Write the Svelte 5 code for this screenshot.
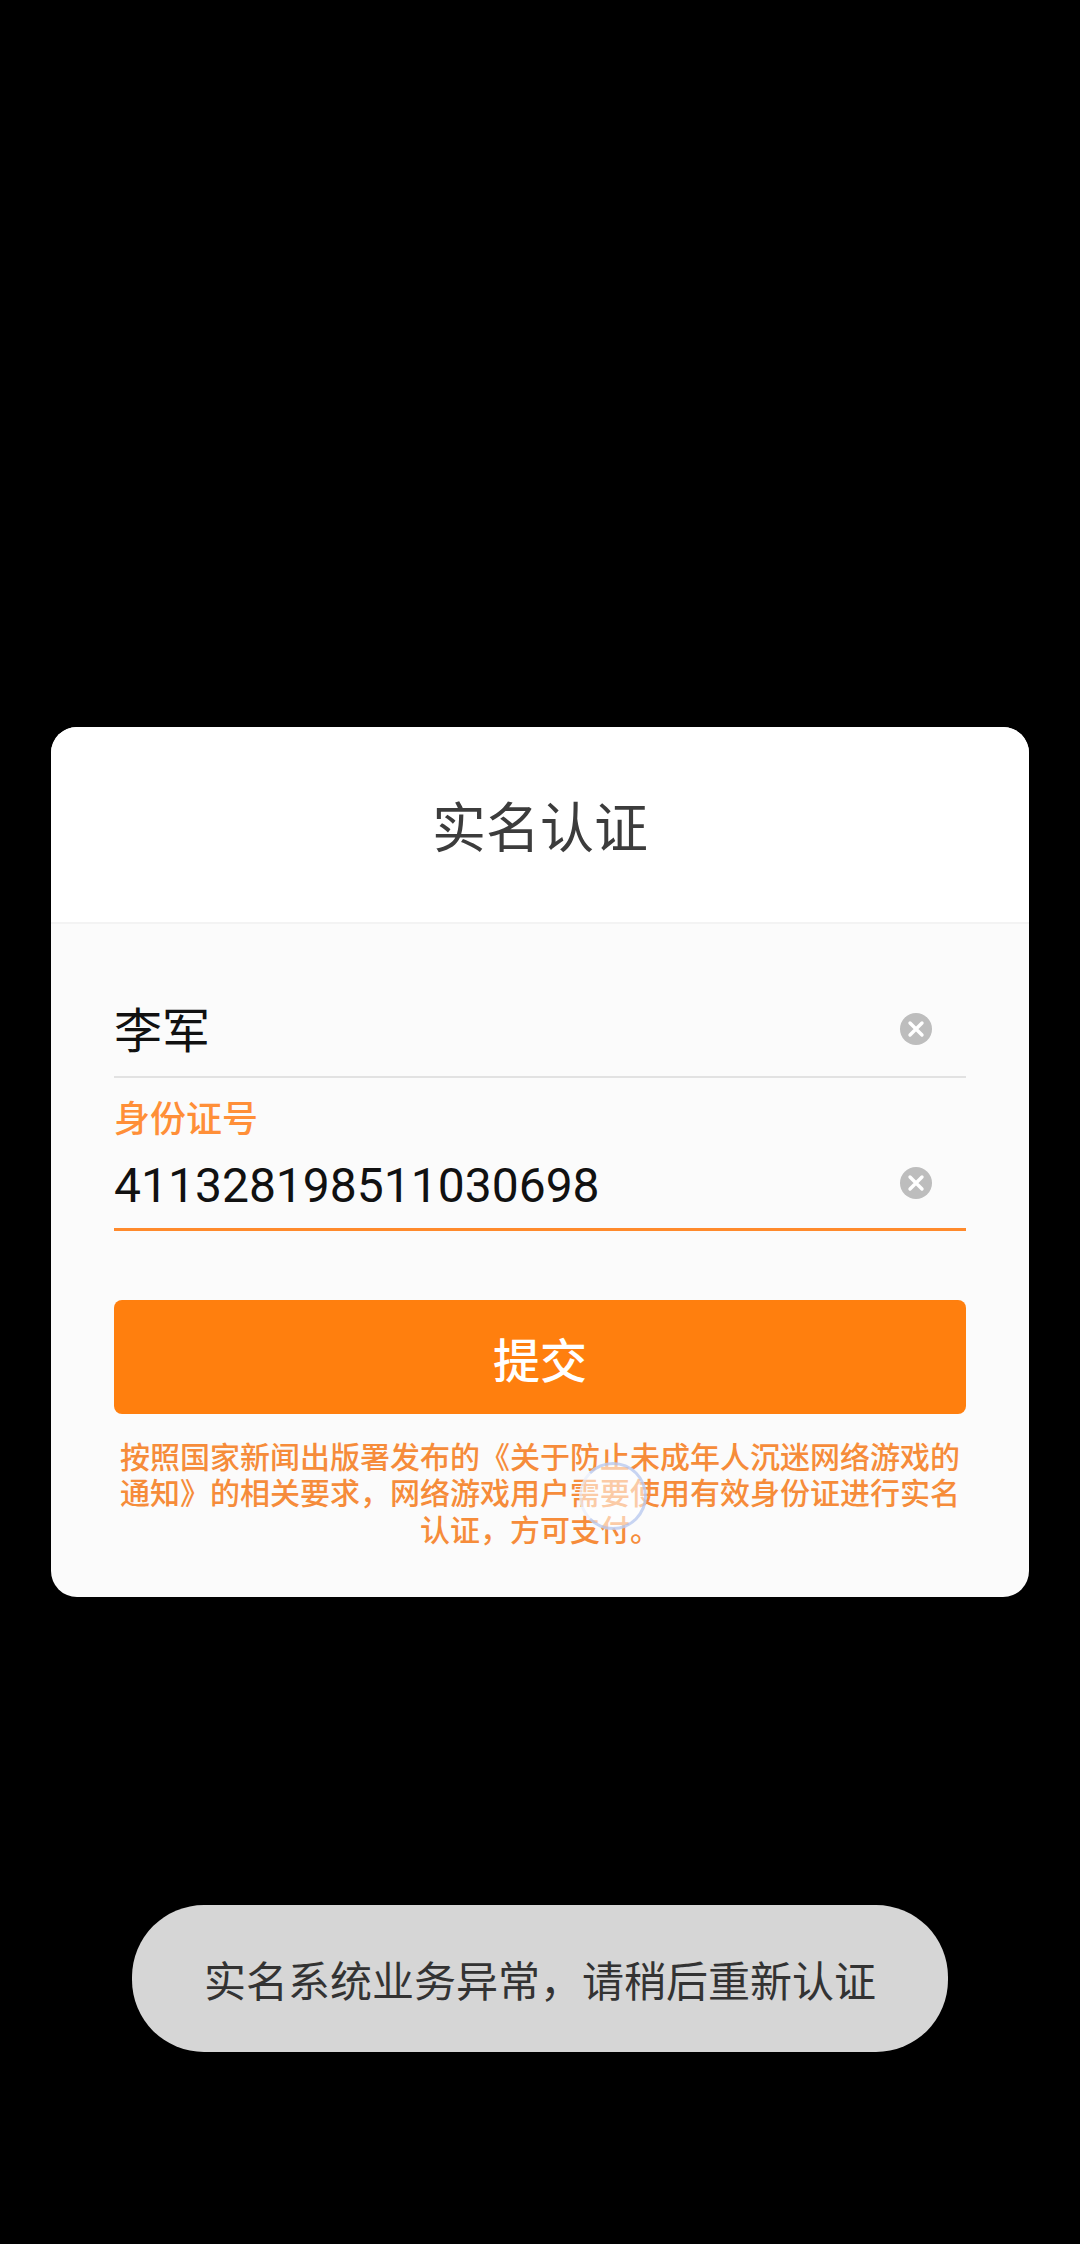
<script>
  const fields = [
    { label: '', value: '李军', focus: false },
    { label: '身份证号', value: '411328198511030698', focus: true }
  ];
</script>

<main class="screen">
  <section class="card">
    <header class="head">实名认证</header>
    <div class="body">
      {#each fields as f}
        <div class="field" class:focus={f.focus}>
          {#if f.label}<div class="label">{f.label}</div>{/if}
          <div class="row">
            <span class="value">{f.value}</span>
            <svg class="clear" viewBox="0 0 32 32" aria-hidden="true">
              <circle cx="16" cy="16" r="16" fill="#bdbdbd" />
              <path d="M10 10 L22 22 M22 10 L10 22" stroke="#fff" stroke-width="3.4" stroke-linecap="round" />
            </svg>
          </div>
        </div>
      {/each}
      <button class="submit">提交</button>
      <p class="note">按照国家新闻出版署发布的《关于防止未成年人沉迷网络游戏的通知》的相关要求，网络游戏用户需要使用有效身份证进行实名认证，方可支付。</p>
      <div class="touch"></div>
    </div>
  </section>
  <div class="toast">实名系统业务异常，请稍后重新认证</div>
</main>

<style>
  :global(body) {
    margin: 0;
    background: #000;
  }
  .screen {
    box-sizing: border-box;
    height: 2244px;
    padding: 727px 51px 0;
    background: #000;
    font-family: "Noto Sans CJK SC", Roboto, sans-serif;
    text-spacing-trim: space-all;
    display: flex;
    flex-direction: column;
    overflow: hidden;
  }
  .card {
    height: 870px;
    border-radius: 26px;
    overflow: hidden;
    background: #fbfbfb;
    display: flex;
    flex-direction: column;
  }
  .head {
    height: 197px;
    flex: none;
    box-sizing: border-box;
    background: #fff;
    border-bottom: 2px solid #f3f3f3;
    display: flex;
    align-items: center;
    justify-content: center;
    font-size: 54px;
    color: #3c3c3c;
  }
  .body {
    position: relative;
    flex: 1;
    padding: 54px 63px 0;
  }
  .field {
    border-bottom: 2px solid #e2e2e2;
  }
  .field.focus {
    border-bottom: 3px solid #ff8a2c;
  }
  .label {
    height: 50px;
    margin-top: 13px;
    font-size: 36px;
    font-weight: 500;
    line-height: 50px;
    color: #ff8f38;
  }
  .row {
    height: 98px;
    padding-top: 3px;
    box-sizing: border-box;
    display: flex;
    align-items: center;
    justify-content: space-between;
    padding-right: 34px;
  }
  .focus .row {
    height: 87px;
    padding-top: 0;
  }
  .value {
    margin-top: 6px;
    font-family: Roboto, "Noto Sans CJK SC", sans-serif;
    font-size: 48px;
    line-height: 60px;
    color: #111;
  }
  .focus .value {
    margin-top: 3px;
  }
  .clear {
    width: 32px;
    height: 32px;
  }
  .focus .clear {
    margin-top: -3px;
  }
  .submit {
    display: block;
    width: 100%;
    height: 114px;
    margin: 69px 0 0;
    border: 0;
    border-radius: 8px;
    background: #ff7f0e;
    color: #fff;
    font-family: inherit;
    font-size: 47px;
    font-weight: 500;
  }
  .note {
    margin: 23px 0 0;
    font-size: 30px;
    font-weight: 500;
    line-height: 36.4px;
    text-align: center;
    color: #f68c3a;
  }
  .touch {
    position: absolute;
    left: 528px;
    top: 538px;
    width: 68px;
    height: 68px;
    box-sizing: border-box;
    border-radius: 50%;
    background: rgba(255, 255, 255, 0.55);
    border: 3px solid rgba(170, 190, 235, 0.65);
    border-left-color: rgba(225, 232, 248, 0.5);
  }
  .toast {
    box-sizing: border-box;
    width: 816px;
    height: 147px;
    margin: 308px 0 0 81px;
    flex: none;
    border-radius: 72px;
    background: #d6d6d6;
    display: flex;
    align-items: center;
    justify-content: center;
    font-size: 42px;
    color: #333;
  }
</style>
